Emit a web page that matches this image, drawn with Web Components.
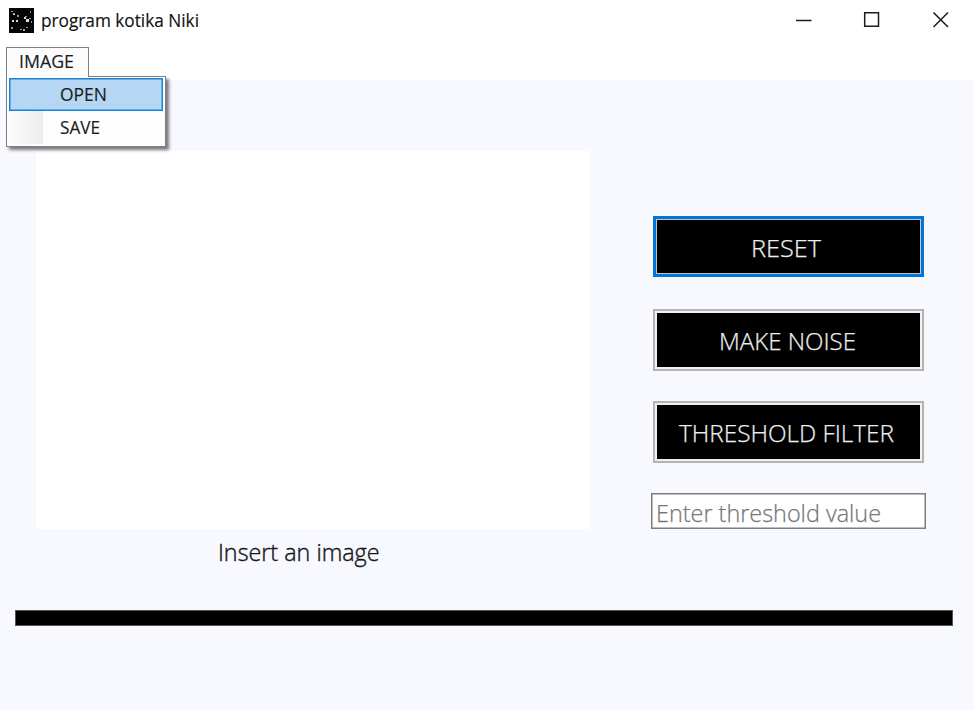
<!DOCTYPE html>
<html lang="en">
<head>
<meta charset="utf-8">
<title>program kotika Niki</title>
<style>
html,body{margin:0;height:100%;overflow:hidden;background:#fff}
body{font-family:"Open Sans","Noto Sans",sans-serif}
</style>
</head>
<body>
<niki-window></niki-window>
<script>
const define = (name, html, setup) => {
  const t = document.createElement('template');
  t.innerHTML = html;
  customElements.define(name, class extends HTMLElement {
    connectedCallback() {
      if (this.shadowRoot) return;
      this.attachShadow({mode: 'open'}).append(t.content.cloneNode(true));
      if (setup) setup(this, this.shadowRoot);
    }
  });
};

/* Text scaled horizontally to the width given in its attribute. */
define('fit-text', `<style>
:host{display:block;flex:none;white-space:nowrap}
span{display:inline-block;transform-origin:0 50%}
</style><span><slot></slot></span>`, (host, root) => {
  const w = +host.getAttribute('width');
  const s = root.querySelector('span');
  host.style.width = w + 'px';
  const natural = s.getBoundingClientRect().width;
  if (natural) s.style.transform = 'scaleX(' + w / natural + ')';
});

define('title-bar', `<style>
:host{display:flex;align-items:center;height:40px;background:#fff;color:#111;font-size:18px;line-height:40px;padding-left:9px;box-sizing:border-box;-webkit-text-stroke:.15px}
.app{width:25px;height:25px;margin-right:7px}
.controls{margin-left:auto;width:184px;height:40px;flex:none}
</style>
<svg class="app" viewBox="0 0 25 25"><rect width="25" height="25" fill="#050505"/>
<g fill="#999"><rect x="2" y="3" width="2" height="1"/><rect x="4" y="5" width="2" height="1"/><rect x="8" y="7" width="2" height="2"/><rect x="16" y="8" width="2" height="1"/><rect x="21" y="3" width="1" height="2"/><rect x="20" y="10" width="2" height="1"/><rect x="22" y="13" width="1" height="2"/><rect x="2" y="19" width="2" height="2"/><rect x="11" y="21" width="2" height="1"/><rect x="17" y="19" width="2" height="1"/><rect x="14" y="21" width="2" height="2"/></g>
<g fill="#ddd"><rect x="3" y="12" width="2" height="2"/><rect x="7" y="12" width="2" height="2"/><rect x="4" y="6" width="2" height="1"/><rect x="17" y="11" width="3" height="3"/><rect x="15" y="9" width="2" height="2"/></g></svg>
<fit-text width="158">program kotika Niki</fit-text>
<svg class="controls" viewBox="790 0 184 40" fill="none" stroke="#1c1c1c" stroke-width="1.5"><path d="M796 20.4H811.5M864.7 12.7H878.5V26.3H864.7ZM933.5 12.5L948 27M948 12.5L933.5 27"/></svg>`);

define('menu-item', `<style>
:host{display:flex;align-items:center;height:33px;box-sizing:border-box;padding:0 0 1px 51px;background:linear-gradient(90deg,#fbfbfb,#eee 34px,#fdfdfd 34px)}
:host([active]){background:#b5d7f3;border:1px solid #1883d7;box-shadow:inset 0 0 0 .5px #1883d7;padding:0 0 1px 50px}
</style><slot></slot>`);

define('menu-bar', `<style>
:host{display:block;height:40px;background:#fff;padding:7px 0 0 6px;box-sizing:border-box;font-size:18.5px;line-height:28px;color:#1b1b1b;position:relative;-webkit-text-stroke:.15px}
.tab{width:83px;height:30px;box-sizing:border-box;border:1.5px solid #808080;border-bottom:0;background:#fcfcfc;display:flex;align-items:center;padding:0 0 3px 12px;position:relative;z-index:2}
.drop{position:absolute;left:6px;top:36px;width:160px;height:71px;box-sizing:border-box;border:1px solid #808080;background:#fdfdfd;padding:1px 2px;box-shadow:3px 3px 3px rgba(0,0,0,.5);z-index:1}
</style>
<div class="tab"><fit-text width="55">IMAGE</fit-text></div>
<div class="drop">
<menu-item active><fit-text width="47">OPEN</fit-text></menu-item>
<menu-item><fit-text width="40">SAVE</fit-text></menu-item>
</div>`);

define('push-button', `<style>
:host{display:block;width:271px;height:62px;box-sizing:border-box;border:2px solid #b4b4b4;background:#f1f1f1;padding:2px}
:host([focused]){height:61px;border:3px solid #0075db;background:#c8c2bc;padding:1px}
button{all:unset;display:flex;align-items:center;justify-content:center;width:100%;height:100%;background:#000;color:#eee;font-weight:300;font-size:24px;line-height:34px;padding-top:2px;box-sizing:border-box;-webkit-text-stroke:.25px}
</style><button><slot></slot></button>`);

define('value-field', `<style>
:host{display:flex;align-items:center;width:275px;height:36px;box-sizing:border-box;border:1px solid #7d7d7d;box-shadow:inset 0 0 0 .5px #7d7d7d;background:#fff;color:#777;font-weight:300;font-size:24px;line-height:32px;padding:4px 0 0 4px;-webkit-text-stroke:.25px}
</style><slot></slot>`);

define('picture-box', `<style>
:host{display:block;width:554px}
.view{height:378px;background:#fff}
.cap{display:flex;padding:6px 0 0 182px;font-size:23.5px;line-height:34px;font-weight:300;color:#161616;-webkit-text-stroke:.4px}
</style><div class="view"></div><div class="cap"><slot></slot></div>`);

define('progress-strip', `<style>
:host{display:block;height:16px;margin:0 21px 0 15px;background:#000;border:1px solid #555;box-sizing:border-box}
</style>`);

define('niki-window', `<style>
:host{display:flex;flex-direction:column;width:974px;height:710px;background:#f8f8ff}
main{display:flex;height:459px;padding:71px 0 0 36px;box-sizing:border-box;flex:none;margin-bottom:71px}
.side{padding:65px 0 0 61px;display:flex;flex-direction:column}
.side>*{margin-left:2px}
.b2{margin-top:32px}.b3{margin-top:30px}
.side>value-field{margin:30px 0 0}
</style>
<title-bar></title-bar>
<menu-bar></menu-bar>
<main>
<picture-box><fit-text width="161.5">Insert an image</fit-text></picture-box>
<div class="side">
<push-button focused><fit-text width="70" style="margin-right:6px">RESET</fit-text></push-button>
<push-button class="b2"><fit-text width="137" style="margin-right:3px">MAKE NOISE</fit-text></push-button>
<push-button class="b3"><fit-text width="215" style="margin-right:4px">THRESHOLD FILTER</fit-text></push-button>
<value-field><fit-text width="225">Enter threshold value</fit-text></value-field>
</div>
</main>
<progress-strip></progress-strip>`);
</script>
</body>
</html>
